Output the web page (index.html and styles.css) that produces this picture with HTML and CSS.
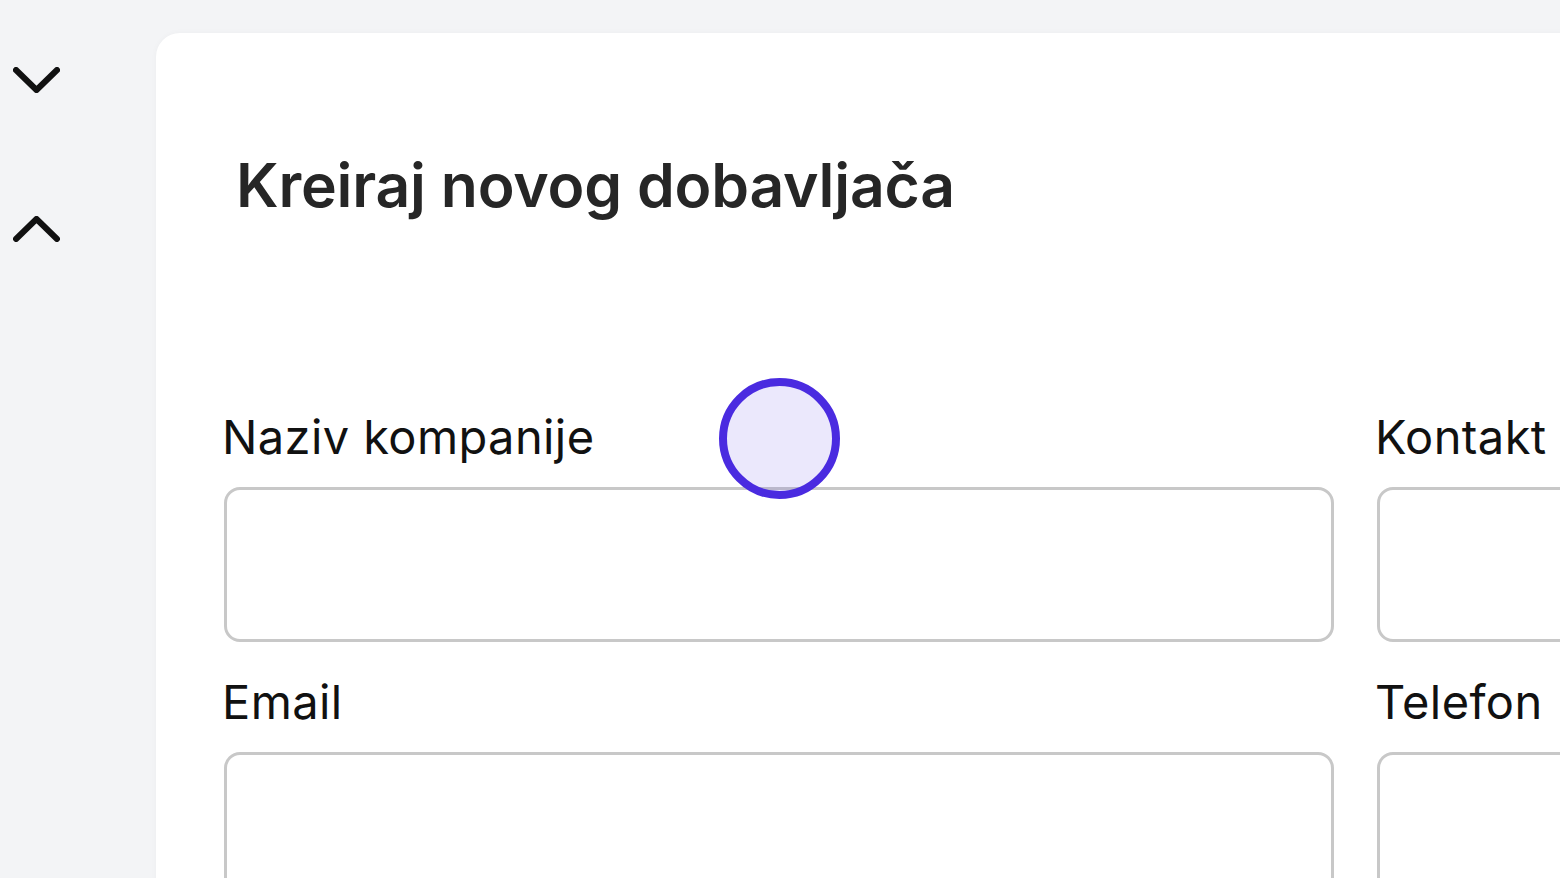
FILE: index.html
```html
<!DOCTYPE html>
<html lang="sr">
<head>
    <meta charset="UTF-8">
    <meta name="viewport" content="width=device-width, initial-scale=1.0">
    <title>Kreiraj novog dobavljača</title>
    <link rel="stylesheet" href="styles.css">
</head>
<body>
    <div class="page">
        <!-- Side controls -->
        <div class="side">
            <button class="side-btn side-btn-down" type="button" aria-label="Dolje">
                <svg width="47" height="26" viewBox="0 0 47 26"><polyline points="3,3 23.5,23 44,3" fill="none" stroke="#111" stroke-width="6" stroke-linecap="round" stroke-linejoin="round"/></svg>
            </button>
            <button class="side-btn side-btn-up" type="button" aria-label="Gore">
                <svg width="47" height="26" viewBox="0 0 47 26"><polyline points="3,23 23.5,3 44,23" fill="none" stroke="#111" stroke-width="6" stroke-linecap="round" stroke-linejoin="round"/></svg>
            </button>
        </div>

        <!-- Supplier form -->
        <div class="card">
            <h1 class="card-title">Kreiraj novog dobavljača</h1>
            <form class="form-grid">
                <div class="field">
                    <label for="company">Naziv kompanije</label>
                    <input type="text" id="company" name="company">
                </div>
                <div class="field">
                    <label for="contact">Kontakt osoba</label>
                    <input type="text" id="contact" name="contact">
                </div>
                <div class="field">
                    <label for="email">Email</label>
                    <input type="text" id="email" name="email">
                </div>
                <div class="field">
                    <label for="phone">Telefon</label>
                    <input type="text" id="phone" name="phone">
                </div>
            </form>
        </div>
    </div>

    <!-- Click indicator -->
    <div class="click-dot"></div>
</body>
</html>
```

FILE: styles.css
```css
body {
    font-family: Inter, "Noto Sans", sans-serif;
    background-color: #f3f4f6; /* Light gray background */
    margin: 0;
    padding: 0;
    overflow: hidden;
    height: 878px;
}

.page {
    display: flex;
    align-items: flex-start;
}

.side {
    width: 156px;
    flex-shrink: 0;
    display: flex;
    flex-direction: column;
    align-items: flex-start;
    padding-left: 13px;
    box-sizing: border-box;
}

.side-btn {
    background: none;
    border: none;
    padding: 0;
    display: block;
    cursor: pointer;
}

.side-btn svg {
    display: block;
}

.side-btn-down {
    margin-top: 67px;
}

.side-btn-up {
    margin-top: 123px;
}

.card {
    flex-shrink: 0;
    width: 2400px;
    height: 1200px;
    margin-top: 33px;
    background-color: #fff; /* White card */
    border-radius: 24px;
    box-shadow: 0 0 6px rgba(0, 0, 0, 0.03);
    padding: 116px 0 0 68px;
    box-sizing: border-box;
}

.card-title {
    margin: 0;
    padding-left: 12px;
    font-size: 60.6px;
    line-height: 72px;
    font-weight: 600;
    color: #262626;
    letter-spacing: -0.2px;
}

.form-grid {
    display: grid;
    grid-template-columns: 1110px 1110px;
    column-gap: 43px;
    row-gap: 32px;
    margin-top: 188px;
}

.field {
    display: flex;
    flex-direction: column;
}

.field label {
    font-size: 47px;
    line-height: 56px;
    font-weight: 400;
    color: #111;
    letter-spacing: 0.4px;
    margin-bottom: 22px;
    margin-left: -2px;
}

.field input {
    height: 155px;
    border: 3px solid #c8c8c8;
    border-radius: 16px;
    box-sizing: border-box;
    background: #fff;
    font-family: inherit;
    font-size: 40px;
    padding: 0 20px;
}

/* Click indicator over the form */
.click-dot {
    position: absolute;
    left: 719px;
    top: 378px;
    width: 121px;
    height: 121px;
    border: 8px solid #4a2be0;
    border-radius: 50%;
    background-color: rgba(76, 47, 226, 0.11);
    box-sizing: border-box;
}
```
